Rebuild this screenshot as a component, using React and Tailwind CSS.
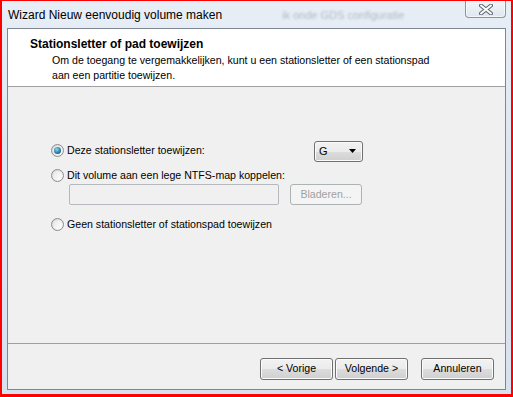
import React from 'react';

const font = { fontFamily: '"Liberation Sans", Arial, sans-serif' };

const Radio = ({ checked }) => (
  <div className="w-[13px] h-[13px] shrink-0 rounded-full border border-[#8e8f8f] bg-[linear-gradient(135deg,#d4d4d4,#f7f7f7)] flex items-center justify-center">
    <div className="w-[9px] h-[9px] rounded-full bg-[linear-gradient(135deg,#e6e6e6,#ffffff)] flex items-center justify-center">
      {checked && (
        <div className="w-[7px] h-[7px] rounded-full bg-[radial-gradient(circle_at_40%_35%,#8fdaf5,#2a7ea8_55%,#0e4464)]" />
      )}
    </div>
  </div>
);

const WinButton = ({ children, className = '' }) => (
  <button
    className={`h-[22px] w-[73px] rounded-[3px] border border-[#707070] bg-[linear-gradient(to_bottom,#f2f2f2_0%,#ebebeb_50%,#dddddd_50%,#cfcfcf_100%)] shadow-[inset_0_0_0_1px_#fbfbfb] text-[10.6px] text-black ${className}`}
  >
    {children}
  </button>
);

const CloseButton = () => (
  <div className="absolute top-0 right-[5px] w-[41px] h-[17px] rounded-b-[4px] border border-t-0 border-[#8594a6] bg-[linear-gradient(to_bottom,#f3f6fa,#dfe6ee)] shadow-[inset_0_0_0_1px_rgba(255,255,255,0.6)] flex items-center justify-center">
    <svg width="14" height="11" viewBox="0 0 14 11">
      <path d="M2 1.5 L12 9.5 M12 1.5 L2 9.5" stroke="#5d6670" strokeWidth="4" strokeLinecap="round" />
      <path d="M2 1.5 L12 9.5 M12 1.5 L2 9.5" stroke="#ffffff" strokeWidth="2" strokeLinecap="round" />
    </svg>
  </div>
);

export default function App() {
  return (
    <div className="w-[513px] h-[397px] bg-[#ff0000] pt-[1px] px-[2px] pb-[3px]" style={font}>
      <div className="relative h-full flex flex-col px-[5px] pb-[4px] bg-[linear-gradient(to_bottom,#e8eef6,#dde6f0_40%,#d8e2ee)]">
        {/* Title bar */}
        <div className="h-[27px] flex items-center pl-[1px] text-[12px] text-black">
          Wizard Nieuw eenvoudig volume maken
        </div>
        <div className="absolute left-[280px] top-[6px] text-[11px] text-[#9aa3b0] blur-[1.2px] opacity-70 select-none">
          ik onde GDS configuratie
        </div>
        <CloseButton />

        {/* Dialog content */}
        <div className="flex-1 flex flex-col border border-[#7d8791] bg-white">
          {/* Header */}
          <div className="h-[58px] shrink-0 pl-[22px] pt-[8px] border-b border-[#a0a0a0]">
            <div className="text-[12px] leading-[15px] font-bold text-black">
              Stationsletter of pad toewijzen
            </div>
            <div className="mt-[1px] pl-[22px] text-[10.6px] leading-[15px] text-black">
              Om de toegang te vergemakkelijken, kunt u een stationsletter of een stationspad
              <br />
              aan een partitie toewijzen.
            </div>
          </div>

          {/* Body */}
          <div className="flex-1 bg-[#f0f0f0] pl-[43px] pt-[53px] text-[10.6px] text-black border-b border-[#a0a0a0]">
            <div className="h-[22px] flex items-center">
              <div className="w-[263px] flex items-center gap-[3px]">
                <Radio checked />
                <span>Deze stationsletter toewijzen:</span>
              </div>
              <div className="w-[49px] h-[21px] rounded-[3px] border border-[#707070] bg-[linear-gradient(to_bottom,#f2f2f2_0%,#ebebeb_50%,#dddddd_50%,#cfcfcf_100%)] shadow-[inset_0_0_0_1px_#fbfbfb] flex items-center justify-between pl-[4px] pr-[6px]">
                <span className="text-[11px]">G</span>
                <svg width="7" height="4" viewBox="0 0 7 4">
                  <path d="M0 0 H7 L3.5 4 Z" fill="#000" />
                </svg>
              </div>
            </div>

            <div className="mt-[5px] h-[17px] flex items-center gap-[3px]">
              <Radio />
              <span>Dit volume aan een lege NTFS-map koppelen:</span>
            </div>

            <div className="flex items-center ml-[18px]">
              <div className="w-[210px] h-[21px] border border-[#b5b8bd] rounded-[2px] bg-[#f0f0f0]" />
              <div className="ml-[11px] w-[72px] h-[21px] rounded-[3px] border border-[#adb2b5] bg-[#f4f4f4] flex items-center justify-center text-[#a0a0a0]">
                Bladeren...
              </div>
            </div>

            <div className="mt-[11px] h-[17px] flex items-center gap-[3px]">
              <Radio />
              <span>Geen stationsletter of stationspad toewijzen</span>
            </div>
          </div>

          {/* Footer */}
          <div className="h-[45px] shrink-0 bg-[#f0f0f0] flex justify-end items-start pt-[14px] pr-[11px]">
            <WinButton>&lt; Vorige</WinButton>
            <WinButton className="ml-[2px]">Volgende &gt;</WinButton>
            <WinButton className="ml-[13px]">Annuleren</WinButton>
          </div>
        </div>
      </div>
    </div>
  );
}
